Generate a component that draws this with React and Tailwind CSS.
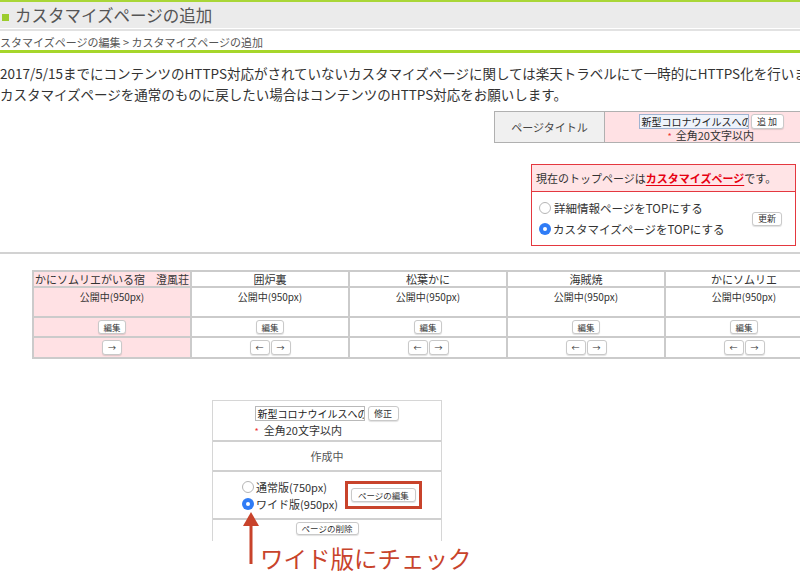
import React from "react";

const font = { fontFamily: '"Noto Sans CJK JP", "Noto Sans", sans-serif' };

const Radio = ({ checked }) =>
    checked ? (
        <span className="w-[12px] h-[12px] rounded-full bg-[#2f7cf6] flex items-center justify-center shrink-0">
            <span className="w-[4px] h-[4px] rounded-full bg-white"></span>
        </span>
    ) : (
        <span className="w-[12px] h-[12px] rounded-full border border-[#b5b5b5] bg-white shrink-0"></span>
    );

const Btn = ({ children, className = "" }) => (
    <span
        className={`inline-flex items-center justify-center bg-white border border-[#c9c9c9] rounded-[3px] shadow-[0_1px_1px_rgba(0,0,0,0.12)] text-[#333] leading-none ${className}`}
    >
        {children}
    </span>
);

const hotels = [
    { name: "かにソムリエがいる宿　澄風荘", first: true },
    { name: "囲炉裏" },
    { name: "松葉かに" },
    { name: "海賊焼" },
    { name: "かにソムリエ" },
];

export default function App() {
    return (
        <div className="w-[800px] h-[571px] overflow-hidden bg-white text-[#333] relative" style={font}>
            {/* Header */}
            <div className="h-[2px] bg-[#a9d637]"></div>
            <div className="h-[26px] bg-[#ebebeb] flex items-center">
                <span className="w-[7px] h-[7px] bg-[#9ccc2e] ml-[2px] mt-[5px]"></span>
                <span className="ml-[6px] text-[16.5px] leading-none text-[#555]">カスタマイズページの追加</span>
            </div>
            <div className="h-[1px] bg-white"></div>
            <div className="h-[2px] bg-[#e2e2e2]"></div>
            <div className="h-[19px] flex items-center pt-[3px] whitespace-nowrap">
                <span className="ml-[-11px] text-[11px] leading-none text-[#555]">
                    カスタマイズページの編集 &gt; カスタマイズページの追加
                </span>
            </div>
            <div className="h-[3px] bg-[#a6d62a]"></div>

            {/* Notice */}
            <div className="mt-[10px] text-[13.5px] leading-[21px] text-[#333] whitespace-nowrap">
                <p>2017/5/15までにコンテンツのHTTPS対応がされていないカスタマイズページに関しては楽天トラベルにて一時的にHTTPS化を行います。</p>
                <p>カスタマイズページを通常のものに戻したい場合はコンテンツのHTTPS対応をお願いします。</p>
            </div>

            {/* Page title */}
            <div className="mt-[6px] ml-[494px] w-[336px] h-[32px] flex border border-[#b0b0b0]">
                <div className="w-[110px] bg-[#f0f0f0] border-r border-[#b0b0b0] flex items-center justify-center text-[11px] text-[#444]">
                    ページタイトル
                </div>
                <div className="flex-1 bg-[#ffe1e4] flex justify-center pt-[2px]">
                    <div>
                        <div className="flex items-center gap-[2px] ml-[-12px]">
                            <div className="w-[110px] h-[15px] bg-[#eef3fb] border border-[#9fb3d1] overflow-hidden whitespace-nowrap text-[10px] leading-[13px] pl-[2px] text-[#222]">
                                新型コロナウイルスへの取り組み
                            </div>
                            <Btn className="w-[33px] h-[15px] text-[9px]">追 加</Btn>
                        </div>
                        <div className="text-[11px] leading-[12px] pl-[17px] text-[#333]">
                            <span className="text-[#e33] text-[9px] mr-[4px]">*</span>全角20文字以内
                        </div>
                    </div>
                </div>
            </div>

            {/* Top page status */}
            <div className="mt-[21px] ml-[531px] w-[265px] border border-[#e4383f]">
                <div className="h-[27px] bg-[#ffe4e6] border-b border-[#e4383f] flex items-center pl-[4px] text-[11px] text-[#333]">
                    現在のトップページは
                    <span className="text-[#e60012] font-bold underline underline-offset-2">カスタマイズページ</span>
                    です。
                </div>
                <div className="h-[53px] flex items-center justify-between pl-[7px] pr-[13px]">
                    <div className="flex flex-col gap-[9px] text-[11.5px] leading-[12px] text-[#333]">
                        <label className="flex items-center gap-[3px]">
                            <Radio />
                            詳細情報ページをTOPにする
                        </label>
                        <label className="flex items-center gap-[2px]">
                            <Radio checked />
                            カスタマイズページをTOPにする
                        </label>
                    </div>
                    <Btn className="w-[30px] h-[14px] text-[9px]">更新</Btn>
                </div>
            </div>

            <div className="mt-[6px] h-[2px] bg-[#d2d2d2]"></div>

            {/* Pages grid */}
            <div className="mt-[16px] ml-[32px] w-[792px] grid grid-cols-[repeat(5,156px)] gap-[2px] p-[2px] bg-[#cbcbcb]">
                {hotels.map((h) => (
                    <div key={h.name + "a"} className={`h-[14px] flex items-center justify-center text-[11px] whitespace-nowrap ${h.first ? "bg-[#ffe1e4]" : "bg-white"}`}>
                        {h.name}
                    </div>
                ))}
                {hotels.map((h) => (
                    <div key={h.name + "b"} className={`h-[28px] text-center text-[10px] leading-[12px] pt-[3px] ${h.first ? "bg-[#ffe1e4]" : "bg-white"}`}>
                        公開中(950px)
                    </div>
                ))}
                {hotels.map((h) => (
                    <div key={h.name + "c"} className={`h-[18px] flex items-center justify-center ${h.first ? "bg-[#ffe1e4]" : "bg-white"}`}>
                        <Btn className="w-[28px] h-[14px] text-[8.5px]">編集</Btn>
                    </div>
                ))}
                {hotels.map((h) => (
                    <div key={h.name + "d"} className={`h-[19px] flex items-center justify-center gap-[1px] ${h.first ? "bg-[#ffe1e4]" : "bg-white"}`}>
                        {!h.first && <Btn className="w-[20px] h-[15px] text-[8px]">←</Btn>}
                        <Btn className="w-[20px] h-[15px] text-[8px]">→</Btn>
                    </div>
                ))}
            </div>

            {/* New page box */}
            <div className="relative">
                <div className="mt-[41px] ml-[212px] w-[230px] border-x border-t border-[#d6d6d6] text-[#333]">
                    <div className="h-[41px] flex justify-center pt-[5px] border-b-2 border-[#d0d0d0]">
                        <div className="ml-[-1px]">
                            <div className="flex items-center gap-[3px]">
                                <div className="w-[110px] h-[15px] bg-white border border-[#b9b9b9] overflow-hidden whitespace-nowrap text-[10px] leading-[13px] pl-[2px] text-[#222]">
                                    新型コロナウイルスへの取り組み
                                </div>
                                <Btn className="w-[31px] h-[15px] text-[9px]">修正</Btn>
                            </div>
                            <div className="mt-[3px] text-[11px] leading-[12px] text-[#333]">
                                <span className="text-[#e33] text-[9px] mr-[5px]">*</span>全角20文字以内
                            </div>
                        </div>
                    </div>
                    <div className="h-[30px] flex items-center justify-center text-[11px] text-[#555] border-b-2 border-[#d0d0d0]">
                        作成中
                    </div>
                    <div className="h-[48px] flex items-center justify-center gap-[7px] pl-[10px] border-b-2 border-[#d0d0d0]">
                        <div className="flex flex-col gap-[5px] text-[11px] leading-[12px]">
                            <label className="flex items-center gap-[2px]">
                                <Radio />
                                通常版(750px)
                            </label>
                            <label className="flex items-center gap-[2px]">
                                <Radio checked />
                                ワイド版(950px)
                            </label>
                        </div>
                        <div className="w-[77px] h-[28px] border-[3px] border-[#c8432b] flex items-center justify-center">
                            <Btn className="w-[65px] h-[14px] text-[8.5px]">ページの編集</Btn>
                        </div>
                    </div>
                    <div className="h-[21px] flex items-start justify-center pt-[2px]">
                        <Btn className="w-[63px] h-[13px] text-[8.5px]">ページの削除</Btn>
                    </div>
                </div>

                {/* Annotation arrow */}
                <svg className="absolute left-[240px] top-[112px]" width="22" height="54" viewBox="0 0 22 54">
                    <polygon points="11,0 3,14 19,14" fill="#c8432b" />
                    <rect x="9.5" y="12" width="3" height="40" fill="#c8432b" />
                </svg>

                <div className="mt-[3px] pl-[260px] text-[23.5px] leading-[28px] text-[#c8432b] whitespace-nowrap">
                    ワイド版にチェック
                </div>
            </div>
        </div>
    );
}
